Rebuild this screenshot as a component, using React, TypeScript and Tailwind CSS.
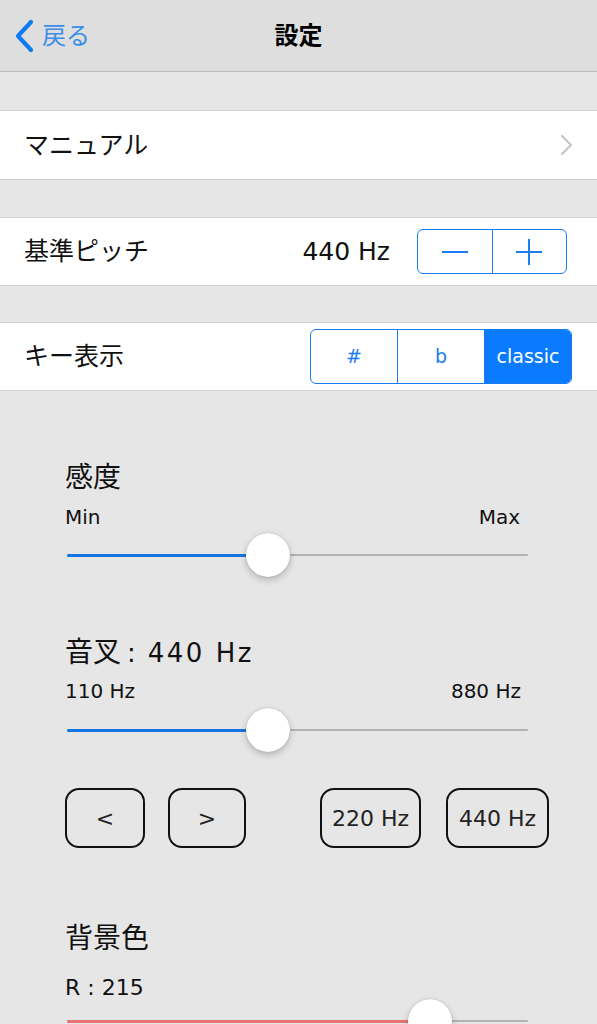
import React from "react";

const FONT = { fontFamily: '"DejaVu Sans", "Noto Sans CJK JP", sans-serif' };

function Slider({ pct, color }: { pct: number; color: string }) {
  return (
    <div className="relative h-[44px] w-[463px]">
      <div className="absolute left-[2px] right-0 top-[21px] h-[2px] rounded-full bg-[#b3b3b3]" />
      <div
        className="absolute left-[2px] top-[21px] h-[3px] rounded-full"
        style={{ width: `${pct * 461}px`, background: color }}
      />
      <div
        className="absolute top-0 h-[44px] w-[44px] rounded-full bg-white shadow-[0_0_1px_rgba(0,0,0,0.35),0_3px_7px_rgba(0,0,0,0.22)]"
        style={{ left: `${2 + pct * 461 - 22}px` }}
      />
    </div>
  );
}

function OutlineButton({ w, children }: { w: string; children: React.ReactNode }) {
  return (
    <div
      className={`${w} flex h-[60px] items-center justify-center rounded-[14px] border-2 border-[#111] text-[22px] text-[#222]`}
    >
      {children}
    </div>
  );
}

export default function App() {
  return (
    <div className="h-[1024px] w-[597px] overflow-hidden bg-[#e6e6e6] text-black" style={FONT}>
      {/* Nav bar */}
      <div className="relative flex h-[72px] items-center border-b border-[#bdbdbd] bg-[#dedede]">
        <div className="flex items-center pl-[13px]">
          <svg width="22" height="34" viewBox="0 0 22 34" fill="none">
            <path d="M18 3 L5 17 L18 31" stroke="#0f7bf0" strokeWidth="4.2" strokeLinecap="round" strokeLinejoin="round" />
          </svg>
          <span className="ml-[7px] text-[24px] leading-none text-[#3a8ee8]">戻る</span>
        </div>
        <div className="absolute inset-x-0 top-0 flex h-[71px] items-center justify-center">
          <span className="text-[24px] font-bold leading-none">設定</span>
        </div>
      </div>

      <div className="h-[38px]" />

      {/* Manual */}
      <div className="flex h-[70px] items-center justify-between border-y border-[#cfcfcf] bg-white pl-[24px] pr-[24px]">
        <span className="pt-[2px] text-[25px] text-[#111]">マニュアル</span>
        <svg width="14" height="22" viewBox="0 0 14 22" fill="none">
          <path d="M3 2 L12 11 L3 20" stroke="#c5c5c7" strokeWidth="2.2" strokeLinecap="round" strokeLinejoin="round" />
        </svg>
      </div>

      <div className="h-[37px]" />

      {/* Pitch */}
      <div className="flex h-[69px] items-center border-y border-[#cfcfcf] bg-white pl-[24px]">
        <span className="text-[25px] text-[#111]">基準ピッチ</span>
        <span className="ml-auto text-[25px] text-[#111]">440 Hz</span>
        <div className="ml-[27px] mr-[30px] flex h-[45px] w-[150px] rounded-[6px] border-[1.5px] border-[#1a7cf0]">
          <div className="flex flex-1 items-center justify-center border-r-[1.5px] border-[#1a7cf0]">
            <div className="h-[2px] w-[26px] bg-[#1a7cf0]" />
          </div>
          <div className="relative flex flex-1 items-center justify-center">
            <div className="h-[2px] w-[26px] bg-[#1a7cf0]" />
            <div className="absolute h-[26px] w-[2px] bg-[#1a7cf0]" />
          </div>
        </div>
      </div>

      <div className="h-[36px]" />

      {/* Key display */}
      <div className="flex h-[69px] items-center border-y border-[#cfcfcf] bg-white pl-[24px]">
        <span className="text-[25px] text-[#111]">キー表示</span>
        <div className="ml-auto mr-[25px] flex h-[55px] w-[262px] overflow-hidden rounded-[6px] border-[1.5px] border-[#1a7cf0] text-[19px]">
          <div className="flex flex-1 items-center justify-center border-r-[1.5px] border-[#1a7cf0] text-[#1a7cf0]">#</div>
          <div className="flex flex-1 items-center justify-center border-r-[1.5px] border-[#1a7cf0] text-[#1a7cf0]">b</div>
          <div className="flex flex-1 items-center justify-center bg-[#0a7bff] text-white">classic</div>
        </div>
      </div>

      {/* Content */}
      <div className="flex flex-col pl-[65px] pt-[68px]">
        <div className="h-[38px] text-[28px] leading-[38px] text-[#111]">感度</div>
        <div className="mt-[6px] flex h-[28px] w-[455px] justify-between text-[20px] leading-[28px] text-[#111]">
          <span>Min</span>
          <span>Max</span>
        </div>
        <div className="mt-[2px]">
          <Slider pct={0.436} color="#1674e2" />
        </div>

        <div className="mt-[57px] flex h-[38px] items-center text-[#111]">
          <span className="text-[28px] leading-[38px]">音叉</span>
          <span className="ml-[6px] text-[26px] leading-[38px]">:</span>
          <span className="ml-[12px] text-[26px] leading-[38px] tracking-[2.5px]">440 Hz</span>
        </div>
        <div className="mt-[5px] flex h-[28px] w-[456px] justify-between text-[20px] leading-[28px] text-[#111]">
          <span>110 Hz</span>
          <span>880 Hz</span>
        </div>
        <div className="mt-[3px]">
          <Slider pct={0.436} color="#1674e2" />
        </div>

        <div className="mt-[36px] flex">
          <OutlineButton w="w-[80px]">&lt;</OutlineButton>
          <div className="ml-[23px]">
            <OutlineButton w="w-[78px]">&gt;</OutlineButton>
          </div>
          <div className="ml-[74px]">
            <OutlineButton w="w-[101px]">220 Hz</OutlineButton>
          </div>
          <div className="ml-[25px]">
            <OutlineButton w="w-[103px]">440 Hz</OutlineButton>
          </div>
        </div>

        <div className="mt-[72px] h-[38px] text-[28px] leading-[38px] text-[#111]">背景色</div>
        <div className="mt-[15px] h-[30px] text-[22px] leading-[30px] text-[#111]">R : 215</div>
        <div className="-mt-[4px]">
          <Slider pct={0.787} color="#e57373" />
        </div>
      </div>
    </div>
  );
}
